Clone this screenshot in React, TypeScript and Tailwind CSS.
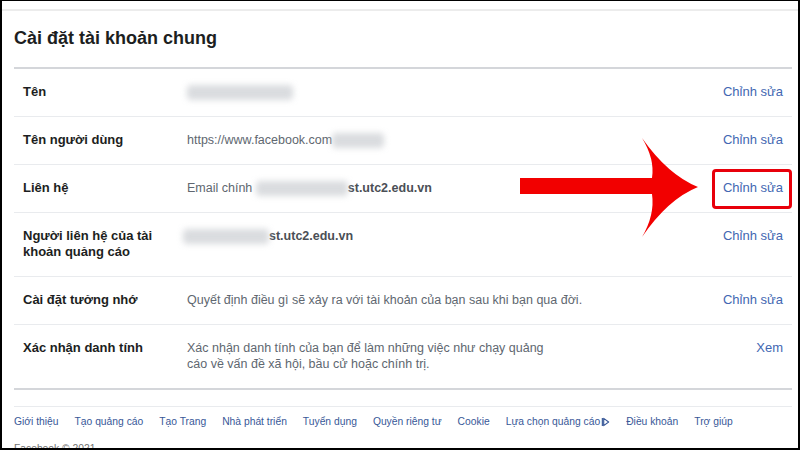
import React from 'react';

const Blur = ({ w }: { w: number }) => (
  <span className="inline-block align-middle h-[15px] bg-[#cdd0d4] blur-[3px] rounded-sm opacity-75" style={{ width: w }} />
);

const rows = [
  { label: 'Tên', value: <Blur w={106} />, action: 'Chỉnh sửa' },
  {
    label: 'Tên người dùng',
    value: (
      <span className="flex items-center">
        https://www.facebook.com<Blur w={52} />
      </span>
    ),
    action: 'Chỉnh sửa',
  },
  {
    label: 'Liên hệ',
    value: (
      <span className="flex items-center">
        Email chính&nbsp;<Blur w={92} />
        <span className="font-bold text-[#4b4f56]">st.utc2.edu.vn</span>
      </span>
    ),
    action: 'Chỉnh sửa',
    highlight: true,
  },
  {
    label: 'Người liên hệ của tài khoản quảng cáo',
    value: (
      <span className="flex items-center -ml-[4px]">
        <Blur w={86} />
        <span className="font-bold text-[#4b4f56]">st.utc2.edu.vn</span>
      </span>
    ),
    action: 'Chỉnh sửa',
  },
  {
    label: 'Cài đặt tưởng nhớ',
    value: <span className="whitespace-nowrap">Quyết định điều gì sẽ xảy ra với tài khoản của bạn sau khi bạn qua đời.</span>,
    action: 'Chỉnh sửa',
  },
  {
    label: 'Xác nhận danh tính',
    value: 'Xác nhận danh tính của bạn để làm những việc như chạy quảng cáo về vấn đề xã hội, bầu cử hoặc chính trị.',
    action: 'Xem',
  },
];

const footerLinks = [
  'Giới thiệu',
  'Tạo quảng cáo',
  'Tạo Trang',
  'Nhà phát triển',
  'Tuyển dụng',
  'Quyền riêng tư',
  'Cookie',
  'Lựa chọn quảng cáo',
  'Điều khoản',
  'Trợ giúp',
];

export default function App() {
  return (
    <div className="w-[800px] h-[450px] overflow-hidden relative bg-white border-black border-t border-x-2 border-b-2 font-['Liberation_Sans',Arial,sans-serif]">
      <div className="mt-[8px] border-t-2 border-[#ececec]">
        <div className="pl-[12px] pr-[6px]">
          {/* Title */}
          <h1 className="pt-[16px] pb-[18px] text-[18px] leading-[22px] font-bold text-[#1c1e21]">
            Cài đặt tài khoản chung
          </h1>
          <div className="h-[2px] bg-[#d4d6da]" />

          {/* Settings rows */}
          {rows.map((r, i) => (
            <div
              key={r.label}
              className={`relative grid grid-cols-[164px_1fr_auto] px-[9px] pt-[15px] pb-[16px] text-[13px] leading-[16px] ${i < rows.length - 1 ? 'border-b border-[#e9ebee]' : ''}`}
            >
              <div className="font-bold text-[#1c1e21] pr-3">{r.label}</div>
              <div className="text-[#606770] text-[12.5px] max-w-[372px]">{r.value}</div>
              <a className="text-[#4267b2] text-right">{r.action}</a>
              {r.highlight && (
                <div className="absolute right-0 top-[4px] w-[80px] h-[40px] border-[3px] border-[#e8000b] rounded-[4px]" />
              )}
            </div>
          ))}
          <div className="h-[2px] bg-[#d4d6da]" />

          {/* Footer */}
          <div className="mt-[16px] border-t border-[#e9ebee] pt-[8px] flex gap-x-[16px] text-[10.3px] leading-[14px] text-[#385898]">
            {footerLinks.map((l) => (
              <a key={l} className="flex items-center">
                {l}
                {l === 'Lựa chọn quảng cáo' && (
                  <svg width="9" height="10" viewBox="0 0 10 11" className="ml-[1px]">
                    <path d="M1.5 1v9" stroke="#385898" strokeWidth="1.3" />
                    <path d="M3 1.5l5.5 4-5.5 4z" fill="none" stroke="#385898" strokeWidth="1.3" strokeLinejoin="round" />
                  </svg>
                )}
              </a>
            ))}
          </div>
          <div className="mt-[13px] text-[10.3px] leading-[14px] text-[#737373]">Facebook © 2021</div>
        </div>
      </div>

      {/* Red annotation arrow */}
      <svg className="absolute left-0 top-0 pointer-events-none" width="800" height="450" viewBox="0 0 800 450">
        <path
          d="M518,177 L650,177 Q653,158 640,137 Q666,174 696,186 Q666,198 640,236 Q653,214 650,193 L518,193 Z"
          fill="#f20000"
        />
      </svg>
    </div>
  );
}
